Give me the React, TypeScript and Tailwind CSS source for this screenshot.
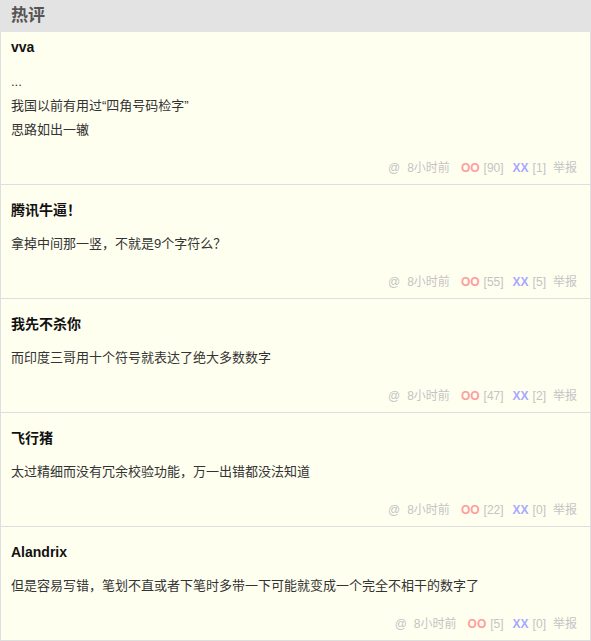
const FONT = "font-['Liberation_Sans','Noto_Sans_CJK_SC',sans-serif]";

type Comment = {
  name: string;
  lines: string[];
  oo: number;
  xx: number;
};

const comments: Comment[] = [
  { name: "vva", lines: ["...", "我国以前有用过“四角号码检字”", "思路如出一辙"], oo: 90, xx: 1 },
  { name: "腾讯牛逼！", lines: ["拿掉中间那一竖，不就是9个字符么？"], oo: 55, xx: 5 },
  { name: "我先不杀你", lines: ["而印度三哥用十个符号就表达了绝大多数数字"], oo: 47, xx: 2 },
  { name: "飞行猪", lines: ["太过精细而没有冗余校验功能，万一出错都没法知道"], oo: 22, xx: 0 },
  {
    name: "Alandrix",
    lines: ["但是容易写错，笔划不直或者下笔时多带一下可能就变成一个完全不相干的数字了"],
    oo: 5,
    xx: 0,
  },
];

function CommentCard({ c, first }: { c: Comment; first: boolean }) {
  return (
    <div
      className={
        "border-x border-b border-[#dedede] bg-[#fffff0] pl-[10px] pr-[13px] pb-[6px] " +
        (first ? "pt-[5px]" : "pt-[15px]")
      }
    >
      <div className="h-[20px] text-[14px] leading-[20px] font-bold text-[#111]">{c.name}</div>
      <div className={"text-[13px] leading-[24px] text-[#333] " + (first ? "mt-[13px]" : "mt-[12px]")}>
        {c.lines.map((l, i) => (
          <div key={i}>{l}</div>
        ))}
      </div>
      <div className="mt-[16px] flex h-[20px] items-center justify-end text-[12px] leading-[20px] text-[#c4c4c4]">
        <span>@</span>
        <span className="ml-[7px]">8小时前</span>
        <span className="ml-[11px] font-bold text-[#ff9d9d]">OO</span>
        <span className="ml-[4px]">[{c.oo}]</span>
        <span className="ml-[9px] font-bold text-[#a9a9ff]">XX</span>
        <span className="ml-[4px]">[{c.xx}]</span>
        <span className="ml-[7px]">举报</span>
      </div>
    </div>
  );
}

export default function App() {
  return (
    <div className={"w-[591px] bg-white " + FONT}>
      {/* header */}
      <div className="flex h-[32px] items-center bg-[#e3e3e3] pl-[11px] text-[17px] font-bold text-[#555]">
        热评
      </div>
      {comments.map((c, i) => (
        <CommentCard key={i} c={c} first={i === 0} />
      ))}
    </div>
  );
}
